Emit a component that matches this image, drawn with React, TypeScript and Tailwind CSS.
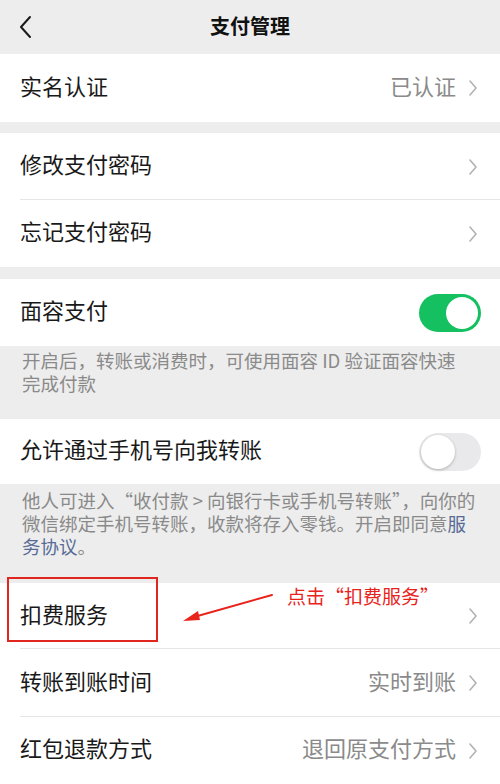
import React from "react";

const font = { fontFamily: '"Noto Sans CJK SC", "Noto Sans", sans-serif' };

function Chevron() {
  return (
    <svg width="10" height="18" viewBox="0 0 10 18" className="shrink-0">
      <path d="M2 2 L8 9 L2 16" fill="none" stroke="#b2b2b2" strokeWidth="1.6" strokeLinecap="round" strokeLinejoin="round" />
    </svg>
  );
}

function Row({ label, value, divider, h = "h-[67px]", chevron = true }: { label: string; value?: string; divider?: boolean; h?: string; chevron?: boolean }) {
  return (
    <div className={`relative flex items-center justify-between bg-white pl-[20px] pr-[22px] ${h}`}>
      <span className="relative top-[-3px] text-[22px] text-[#191919]">{label}</span>
      <div className="flex items-center gap-[12px]">
        {value && <span className="relative top-[-3px] text-[22px] text-[#8a8a8a]">{value}</span>}
        {chevron && <Chevron />}
      </div>
      {divider && <div className="absolute bottom-0 left-[20px] right-0 h-px bg-[#e6e6e6]" />}
    </div>
  );
}

function Toggle({ on }: { on: boolean }) {
  return on ? (
    <div className="flex h-[38px] w-[62px] items-center justify-end rounded-full bg-[#15c060] p-[3px]">
      <div className="h-[32px] w-[32px] rounded-full bg-white" />
    </div>
  ) : (
    <div className="flex h-[38px] w-[62px] items-center justify-start rounded-full bg-[#e9e9eb] p-[2px]">
      <div className="h-[34px] w-[34px] rounded-full bg-white shadow-[0_1px_3px_rgba(0,0,0,0.25)]" />
    </div>
  );
}

export default function App() {
  return (
    <div className="flex min-h-[784px] w-[500px] flex-col overflow-hidden bg-[#ededed]" style={font}>
      {/* Header */}
      <div className="relative flex h-[54px] items-center justify-center bg-[#ededed]">
        <svg width="14" height="24" viewBox="0 0 14 24" className="absolute left-[19px] top-[15px]">
          <path d="M11 2 L2 12 L11 22" fill="none" stroke="#1a1a1a" strokeWidth="2" strokeLinecap="round" strokeLinejoin="round" />
        </svg>
        <span className="relative top-[-1px] text-[20px] font-semibold text-[#111]">支付管理</span>
      </div>

      <Row label="实名认证" value="已认证" h="h-[68px]" />
      <div className="h-[11px]" />
      <Row label="修改支付密码" divider />
      <Row label="忘记支付密码" />
      <div className="h-[12px]" />

      <div className="flex h-[67px] items-center justify-between bg-white pl-[20px] pr-[19px]">
        <span className="relative top-[-3px] text-[22px] text-[#191919]">面容支付</span>
        <Toggle on />
      </div>
      <div className="px-[22px] pb-[24px] pt-[3px] text-[18.5px] leading-[23px] text-[#8a8a8a]">
        <div className="whitespace-nowrap">开启后，转账或消费时，可使用面容 ID 验证面容快速</div>
        <div className="whitespace-nowrap">完成付款</div>
      </div>

      <div className="flex h-[65px] items-center justify-between bg-white pl-[20px] pr-[19px]">
        <span className="relative top-[-3px] text-[22px] text-[#191919]">允许通过手机号向我转账</span>
        <Toggle on={false} />
      </div>
      <div className="px-[22px] pb-[25px] pt-[5px] text-[18.5px] leading-[23px] text-[#8a8a8a]">
        <div className="whitespace-nowrap">他人可进入“收付款 &gt; 向银行卡或手机号转账”，向你的</div>
        <div className="whitespace-nowrap">
          微信绑定手机号转账，收款将存入零钱。开启即同意<span className="text-[#576b95]">服</span>
        </div>
        <div className="whitespace-nowrap">
          <span className="text-[#576b95]">务协议</span>。
        </div>
      </div>

      <div className="relative">
        <Row label="扣费服务" divider h="h-[66px]" />
        <div className="pointer-events-none absolute left-[7px] top-[-6px] h-[65px] w-[151px] border-2 border-solid border-[color:#e0261f]" />
        <svg className="pointer-events-none absolute left-[180px] top-[8px]" width="100" height="34" viewBox="0 0 100 34">
          <path d="M92 4 L14 26" stroke="#e8231c" strokeWidth="2" strokeLinecap="round" />
          <path d="M3 30 L18 20 L20 29 Z" fill="#e8231c" />
        </svg>
        <span className="pointer-events-none absolute left-[287px] top-[-1px] whitespace-nowrap text-[19px] text-[#e8231c]">
          点击“扣费服务”
        </span>
      </div>
      <Row label="转账到账时间" value="实时到账" divider h="h-[68px]" />
      <Row label="红包退款方式" value="退回原支付方式" />
    </div>
  );
}
